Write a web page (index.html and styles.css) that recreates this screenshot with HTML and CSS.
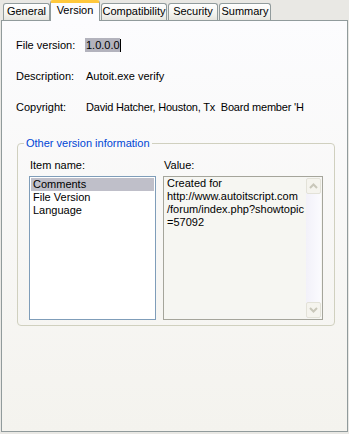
FILE: index.html
```html
<!DOCTYPE html>
<html>
<head>
<meta charset="utf-8">
<link rel="stylesheet" href="styles.css">
</head>
<body>
<div class="dialog">
  <div class="tabs">
    <div class="tab t-general">General</div>
    <div class="tab active t-version">Version</div>
    <div class="tab t-compat">Compatibility</div>
    <div class="tab t-security">Security</div>
    <div class="tab t-summary">Summary</div>
  </div>
  <div class="panel">
    <div class="fields">
      <div class="label">File version:</div>
      <div class="value"><span class="sel">1.0.0.0</span><span class="caret"></span></div>
      <div class="label">Description:</div>
      <div class="value">Autoit.exe verify</div>
      <div class="label">Copyright:</div>
      <div class="value">David Hatcher, Houston, Tx&nbsp; Board member 'H</div>
    </div>
    <fieldset class="group">
      <legend>Other version information</legend>
      <div class="cols">
        <div class="col col-items">
          <div class="cap">Item name:</div>
          <ul class="list">
            <li class="selected">Comments</li>
            <li>File Version</li>
            <li>Language</li>
          </ul>
        </div>
        <div class="col col-value">
          <div class="cap">Value:</div>
          <div class="textbox">
            <div class="text">Created for<br>http://www.autoitscript.com<br>/forum/index.php?showtopic<br>=57092</div>
            <div class="scroll">
              <div class="sbtn">
                <svg width="9" height="6" viewBox="0 0 9 6"><path d="M1 5 L4.5 1.5 L8 5" fill="none" stroke="#c9c7ba" stroke-width="2"/></svg>
              </div>
              <div class="track"></div>
              <div class="sbtn">
                <svg width="9" height="6" viewBox="0 0 9 6"><path d="M1 1 L4.5 4.5 L8 1" fill="none" stroke="#c9c7ba" stroke-width="2"/></svg>
              </div>
            </div>
          </div>
        </div>
      </div>
    </fieldset>
  </div>
</div>
</body>
</html>
```
FILE: styles.css
```css
html, body {
  margin: 0;
  padding: 0;
}
body {
  background: #e9e8e4;
  font-family: "Liberation Sans", Arial, sans-serif;
  font-size: 11px;
  color: #000;
  width: 349px;
  height: 434px;
  overflow: hidden;
}
.dialog {
  padding-left: 1px;
}
.tabs {
  display: flex;
  align-items: flex-end;
  gap: 1px;
  height: 20px;
  padding-left: 2px;
  position: relative;
  z-index: 2;
}
.tab {
  box-sizing: border-box;
  height: 17px;
  line-height: 15px;
  border: 1px solid #919b9c;
  border-bottom: none;
  border-radius: 3px 3px 0 0;
  background: linear-gradient(#ffffff, #f3f3ef 60%, #e6e5df);
  text-align: center;
  white-space: nowrap;
}
.t-general { width: 47px; }
.t-version { width: 50px; }
.t-compat { width: 66px; }
.t-security { width: 50px; }
.t-summary { width: 52px; }
.tab.active {
  height: 21px;
  margin-left: -1px;
  margin-bottom: -1px;
  background: #fcfcfe;
  border-top: 3px solid #ffc83c;
  border-radius: 3px 3px 0 0;
  line-height: 15px;
}
.panel {
  box-sizing: border-box;
  width: 347px;
  height: 412px;
  border: 1px solid #919b9c;
  background: linear-gradient(#fcfcfe, #f4f3ee);
  padding: 18px 0 0 14px;
}
.fields {
  display: grid;
  grid-template-columns: 70px auto;
  row-gap: 18px;
  line-height: 13px;
}
.value {
  white-space: nowrap;
}
.value:last-child {
  letter-spacing: -0.2px;
}
.sel {
  background: #b3b3bd;
  padding: 1px 0;
  margin-left: -1px;
  padding-left: 1px;
}
.caret {
  display: inline-block;
  width: 1px;
  height: 13px;
  background: #000;
  vertical-align: top;
}
.group {
  box-sizing: border-box;
  width: 318px;
  height: 190px;
  margin: 22px 0 0 1px;
  padding: 0 0 0 6px;
  border: 1px solid #d0d0bf;
  border-radius: 4px;
}
.group legend {
  color: #0046d5;
  padding: 0 2px;
  line-height: 14px;
}
.cols {
  display: flex;
  gap: 7px;
  margin: 9px 0 0 5px;
}
.cap {
  line-height: 13px;
  padding-left: 1px;
  margin-bottom: 4px;
}
.col-items { width: 127px; }
.col-value { width: 160px; }
.list {
  box-sizing: border-box;
  list-style: none;
  margin: 0;
  padding: 1px;
  height: 144px;
  border: 1px solid #7f9db9;
  background: #fff;
}
.list li {
  line-height: 13px;
  padding-left: 2px;
}
.list li.selected {
  background: #bfbfc9;
}
.textbox {
  box-sizing: border-box;
  height: 144px;
  border: 1px solid #a5a59b;
  background: #f6f6f2;
  display: flex;
}
.text {
  flex: 1;
  line-height: 13px;
  padding: 0 0 0 3px;
  white-space: nowrap;
  overflow: hidden;
}
.scroll {
  width: 15px;
  margin: 1px 1px 1px 0;
  display: flex;
  flex-direction: column;
  background: linear-gradient(90deg, #f2f1f9, #fbfbfe);
}
.track {
  flex: 1;
}
.sbtn {
  box-sizing: border-box;
  height: 16px;
  border: 1px solid #e3e2d8;
  border-radius: 2px;
  background: #f5f4ee;
  display: flex;
  align-items: center;
  justify-content: center;
}
```
